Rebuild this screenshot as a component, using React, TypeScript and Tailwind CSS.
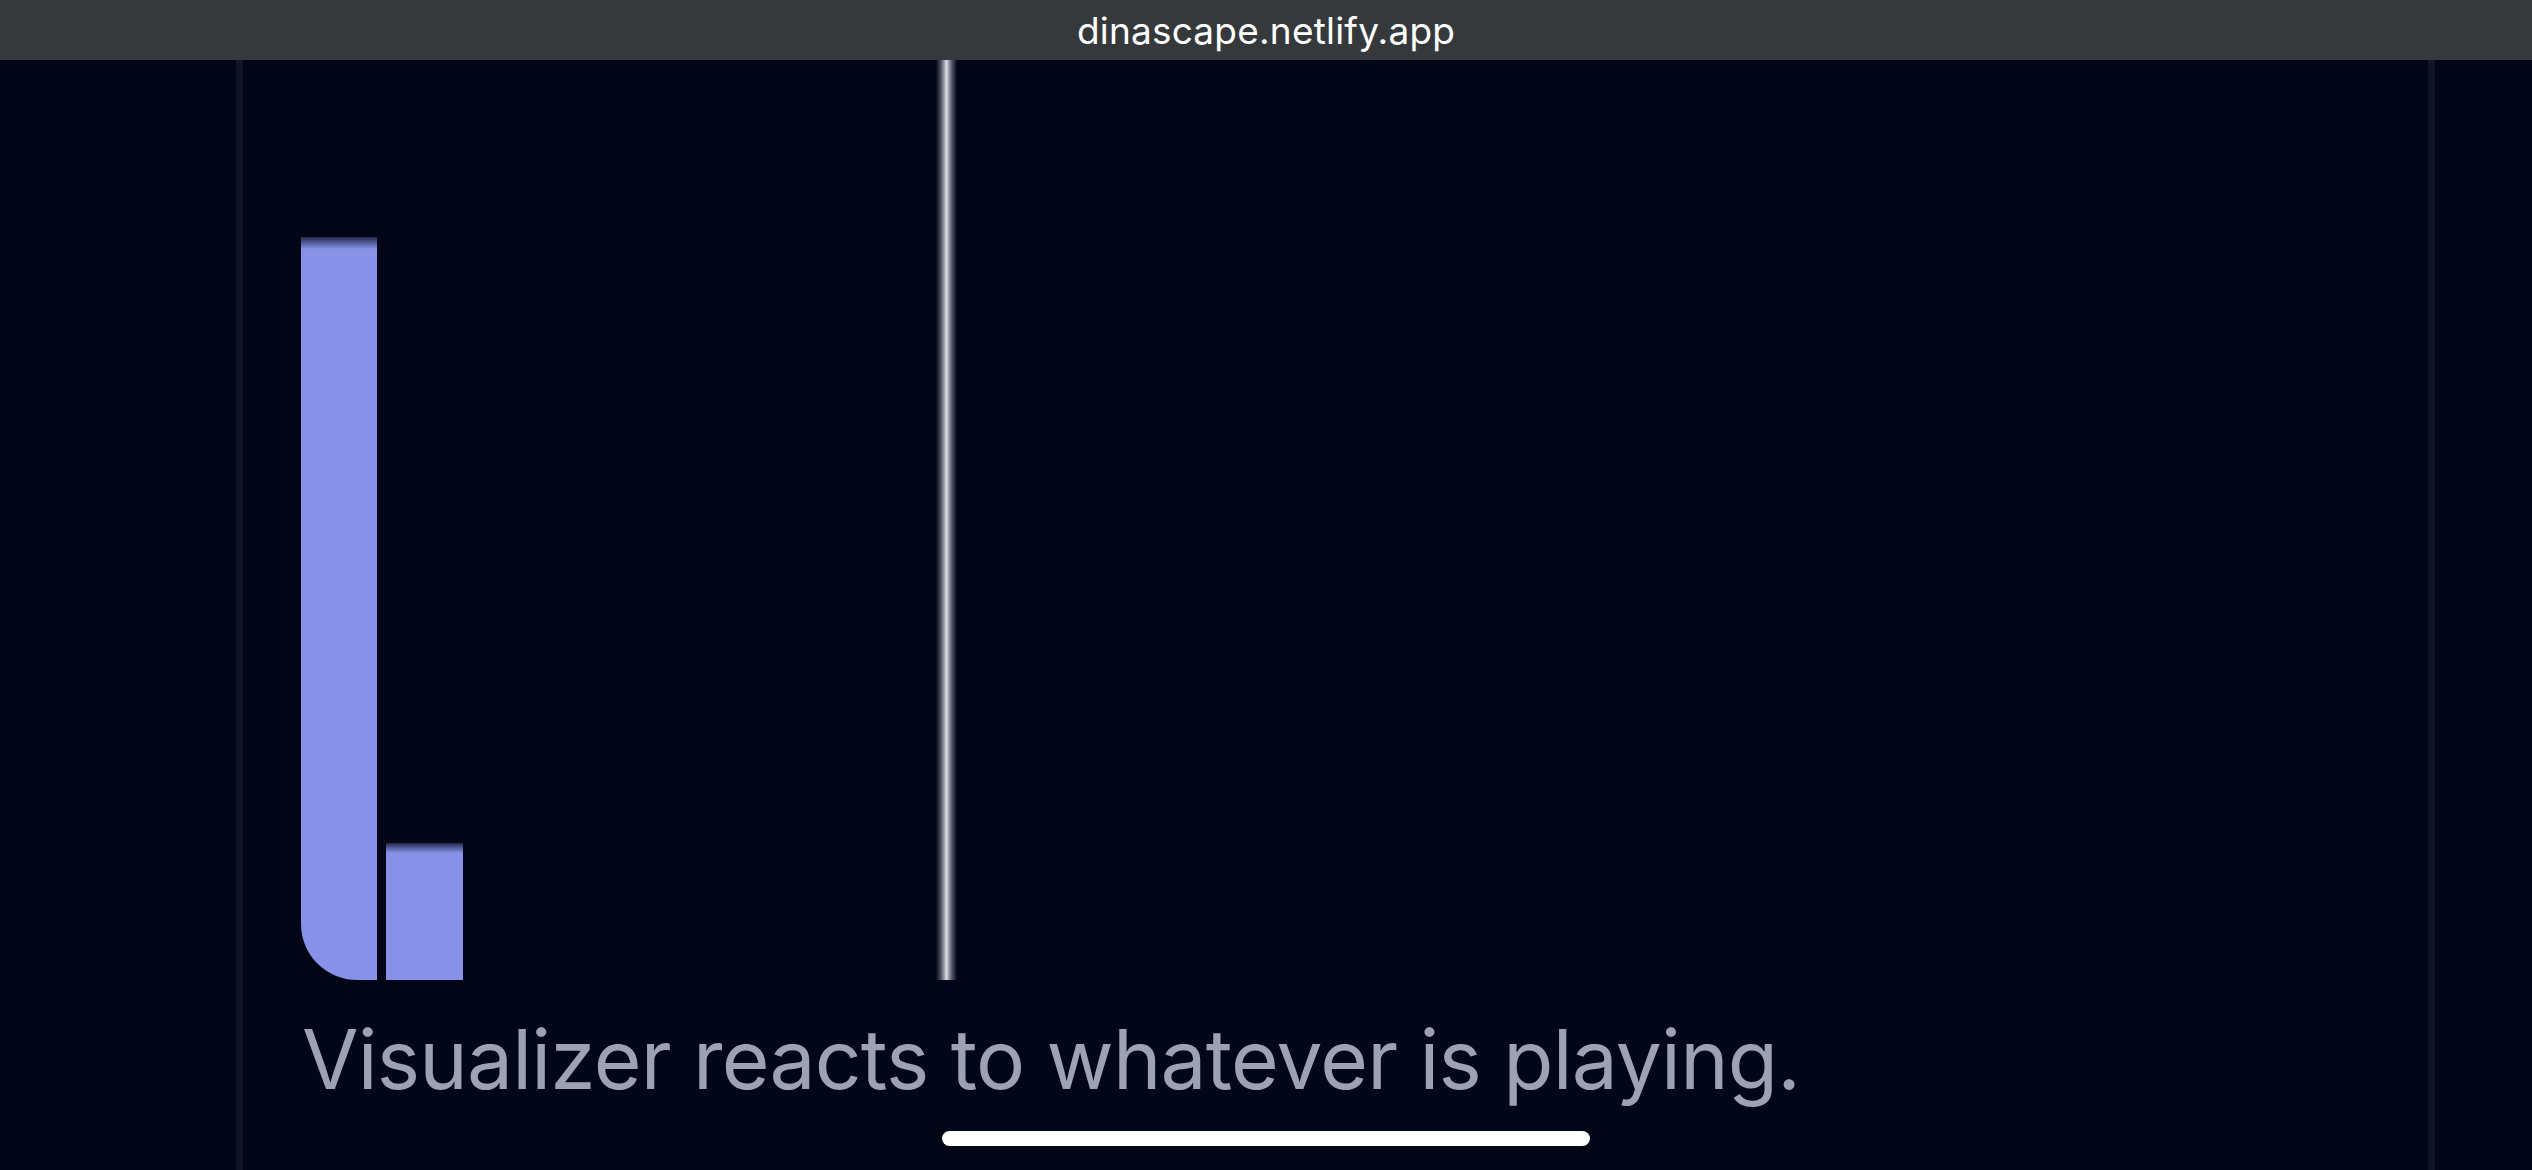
import React from "react";

export default function App() {
  return (
    <div className="relative w-[2532px] h-[1170px] overflow-hidden bg-[#020617] flex flex-col font-['Inter','Liberation_Sans',sans-serif]">
      <div className="h-[60px] shrink-0 bg-[#35393b] flex items-center justify-center pt-[1px] text-white text-[37px] leading-none tracking-[0.2px]">
        dinascape.netlify.app
      </div>
      <div className="flex-1 ml-[236px] w-[2199px] border-x-[7px] border-[#0f1626] flex flex-col">
        <div className="relative h-[920px] shrink-0 pl-[58px] flex items-end gap-[9px]">
          <div className="w-[76px] h-[743px] rounded-bl-[56px] bg-[linear-gradient(to_bottom,rgba(135,145,232,0.25),#8791e8_12px)]" />
          <div className="w-[77px] h-[137px] bg-[linear-gradient(to_bottom,rgba(135,145,232,0.25),#8791e8_10px)]" />
          <div className="absolute left-[693px] top-0 bottom-0 w-[21px] bg-[linear-gradient(to_right,transparent,rgba(150,155,170,0.55)_25%,#d8dbe2_50%,rgba(150,155,170,0.55)_75%,transparent)]" />
        </div>
        <p className="mt-[39px] pl-[59px] text-[82px] leading-none tracking-[-0.8px] text-[#9da1b4] whitespace-nowrap">
          Visualizer reacts to whatever is playing.
        </p>
      </div>
      <div className="absolute left-[942px] top-[1131px] w-[648px] h-[15px] rounded-full bg-white" />
    </div>
  );
}
